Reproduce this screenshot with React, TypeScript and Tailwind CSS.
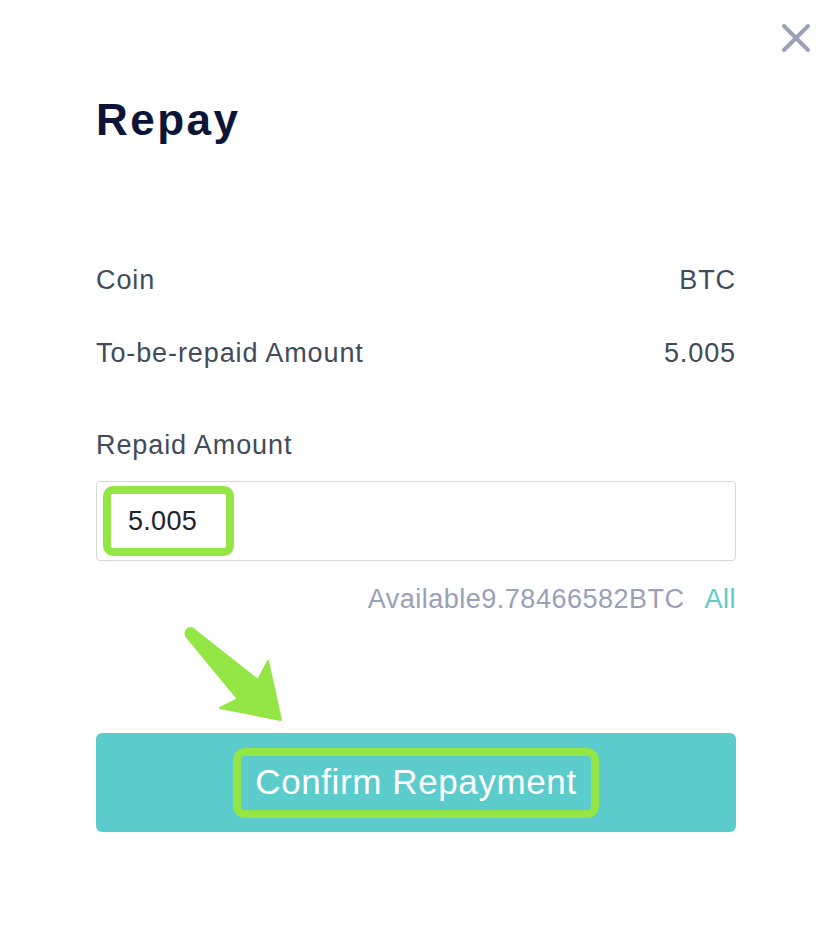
import React from 'react';

const rows = [
  { label: 'Coin', value: 'BTC' },
  { label: 'To-be-repaid Amount', value: '5.005' },
];

export default function App() {
  return (
    <div
      className="relative w-[832px] h-[950px] bg-white overflow-hidden"
      style={{ fontFamily: '"Liberation Sans", Arial, sans-serif' }}
    >
      {/* close */}
      <button className="absolute top-[22px] right-[20px] w-8 h-8 flex items-center justify-center">
        <svg width="32" height="32" viewBox="0 0 32 32" fill="none">
          <path d="M4 4 L28 28 M28 4 L4 28" stroke="#9ba0b8" strokeWidth="4" strokeLinecap="round" />
        </svg>
      </button>

      <div className="px-[96px] pt-[98px]">
        <h1 className="text-[44px] leading-none font-bold text-[#0c1437] tracking-[2.5px]">Repay</h1>

        <div className="mt-[123px] flex flex-col gap-[43px]">
          {rows.map((r) => (
            <div key={r.label} className="flex justify-between text-[27px] leading-[30px] text-[#404b5b] tracking-[0.9px]">
              <span>{r.label}</span>
              <span>{r.value}</span>
            </div>
          ))}
        </div>

        <div className="mt-[62px] text-[27px] leading-[30px] text-[#404b5b] tracking-[0.9px]">Repaid Amount</div>

        <div className="mt-[21px] h-[80px] border border-[#d4d7e0] rounded-[4px] flex items-center pl-[6px]">
          <span className="h-[70px] w-[131px] border-[8px] border-[#93e645] rounded-[10px] flex items-center pl-[17px] text-[27px] text-[#1c2230] tracking-[0.3px]">
            5.005
          </span>
        </div>

        <div className="mt-[23px] flex justify-end items-center gap-[20px] text-[27px] leading-[30px] tracking-[0.5px]">
          <span className="text-[#9ba0b9]">Available9.78466582BTC</span>
          <span className="text-[#5ccbcb]">All</span>
        </div>

        <button className="mt-[119px] w-full h-[99px] rounded-[6px] bg-[#5ccbcb] flex items-center justify-center">
          <span className="h-[70px] px-[14px] border-[8px] border-[#93e645] rounded-[12px] flex items-center text-[35px] text-white tracking-[0.6px]">
            Confirm Repayment
          </span>
        </button>
      </div>

      {/* annotation arrow */}
      <svg className="absolute left-0 top-0 pointer-events-none" width="832" height="950" viewBox="0 0 832 950">
        <path
          d="M186 636 Q184 628 192 628 L258 680 L268 661 L281 720 L220 708 L238 699 Z"
          fill="#93e645"
          stroke="#93e645"
          strokeWidth="2"
          strokeLinejoin="round"
        />
      </svg>
    </div>
  );
}
